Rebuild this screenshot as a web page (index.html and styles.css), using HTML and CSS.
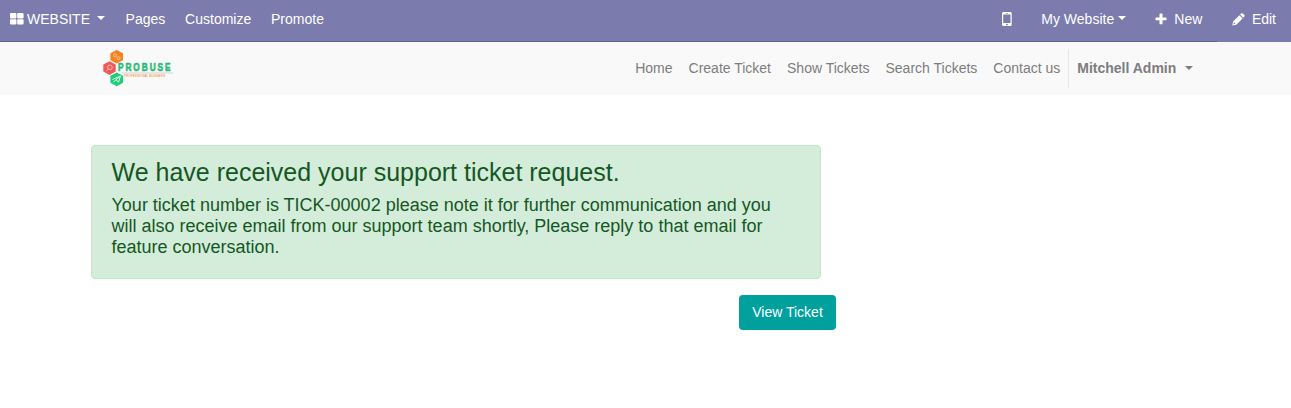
FILE: index.html
```html
<!DOCTYPE html>
<html lang="en">
<head>
<meta charset="utf-8">
<title>Support ticket</title>
<link rel="stylesheet" href="styles.css">
</head>
<body>
<nav class="topbar">
  <div class="menu">
    <a class="brand"><svg class="grid-icon" width="14" height="12" viewBox="0 0 14 12"><rect x="0" y="0" width="6.4" height="5.5" rx="1"/><rect x="7.2" y="0" width="6.4" height="5.5" rx="1"/><rect x="0" y="6.3" width="6.4" height="5.2" rx="1"/><rect x="7.2" y="6.3" width="6.4" height="5.2" rx="1"/></svg><span>WEBSITE</span><i class="caret"></i></a>
    <a>Pages</a>
    <a>Customize</a>
    <a>Promote</a>
  </div>
  <div class="tools">
    <a class="mobile"><svg width="10" height="14" viewBox="0 0 10 14"><path fill-rule="evenodd" d="M1.500 0h7Q9.700 0 9.700 1.500v11Q9.700 14 8.500 14h-7Q0 14 0 12.500v-11Q0 0 1.500 0zM1.200 2.500v8.400h7.300V2.500zM3.600 1v.5h2.500V1zM5 11.700a.8.8 0 1 0 .01 0z"/></svg></a>
    <a class="site">My Website<i class="caret"></i></a>
    <a class="new"><svg width="12" height="12" viewBox="0 0 12 12"><path d="M5 .5h2q.5 0 .5.500v3.500H11q.5 0 .5.500v1.700q0 .5-.5.500H7.500v3.500q0 .5-.5.500H5q-.5 0-.5-.5V7.200H1q-.5 0-.5-.5V5q0-.5.5-.5h3.500V1q0-.5.5-.5z"/></svg><span>New</span></a>
    <a class="edit"><svg width="13" height="13" viewBox="0 0 13 13"><path fill-rule="evenodd" d="M.3 12.500l.8-4L7.400 2.200l3.200 3.200L4.300 11.700zM2 9.300l-.5 2 2-.5zM8 1.600L9.200.4q.8-.7 1.600 0l1.600 1.600q.7.800 0 1.600L11.200 4.800z"/></svg><span>Edit</span></a>
  </div>
</nav>
<header class="header">
  <svg class="logo" width="74" height="40" viewBox="0 0 74 40">
    <path fill="#f58220" d="M14.700 1l6.300 3.300v6.900l-6.300 3.300-6.300-3.300V4.300z"/>
    <path fill="#ee5a5a" d="M7.500 12.200l6.200 3.300v7l-6.200 3.500-6.200-3.500v-7z"/>
    <path fill="#1fcc78" d="M14.700 23.500l6.300 3.300v7l-6.300 3.500-6.300-3.500v-7z"/>
    <g fill="none" stroke="#ffd9c0" stroke-width=".7">
      <circle cx="13" cy="6.300" r="1.500"/><circle cx="16.500" cy="9.300" r="1.500"/>
      <circle cx="8" cy="18.300" r="2.300"/><path d="M6.300 20l-2 2"/>
    </g>
    <path fill="none" stroke="#d9ffec" stroke-width="1" d="M10.500 30.500l8-3.500-2 6.300-2.500-2.600-2.500 2.500M18.500 27l-4.500 3.700"/>
    <g transform="translate(16 22.300) scale(.75 1)"><text class="logo-name">PROBUSE</text></g>
    <path d="M20 24h51" stroke="#bbb" stroke-width=".6"/>
    <text class="logo-tag" x="22" y="28.300" textLength="41" lengthAdjust="spacingAndGlyphs">PROFESSIONAL BUSINESS</text>
  </svg>
  <div class="links">
    <a>Home</a><a>Create Ticket</a><a>Show Tickets</a><a>Search Tickets</a><a>Contact us</a>
    <a class="user">Mitchell Admin<i class="caret"></i></a>
  </div>
</header>
<main class="content">
  <section class="alert">
    <h3>We have received your support ticket request.</h3>
    <h4>Your ticket number is TICK-00002 please note it for further communication and you will also receive email from our support team shortly, Please reply to that email for feature conversation.</h4>
  </section>
  <a class="button">View Ticket</a>
</main>
</body>
</html>
```
FILE: styles.css
```css
* { box-sizing: border-box; }
body { margin: 0; background: #fff; font: 14px/21px "Liberation Sans", Arial, sans-serif; }
svg { display: block; fill: currentColor; flex: none; }
.caret { display: inline-block; border: 4.200px solid transparent; border-top-color: currentColor; border-bottom: 0; }
.topbar { display: flex; justify-content: space-between; height: 42px; padding: 9px 15px 0 10px; color: #fff;
  background: linear-gradient(#5f5e97, #5f5e97) 0 100% / 1217px 1px no-repeat #7c7bad; }
.topbar a { display: flex; align-items: center; height: 21px; }
.menu, .tools { display: flex; }
.menu { gap: 19.800px; }
.menu svg { margin-top: -2px; }
.brand span { margin-left: 3px; }
.brand .caret { margin: -3px .600px 0 7.200px; }
.mobile svg, .new svg, .edit svg { margin-top: -1px; }
.site { margin-left: 29px; }
.site .caret { margin: -3px 0 0 4px; }
.new { margin-left: 29.200px; }
.new span, .edit span { margin-left: 7px; }
.edit { margin-left: 29.500px; }
.header { display: flex; justify-content: space-between; height: 53px; padding: 7px 90px 7px 102px; background: #f9f9f9; }
.logo-name { font-size: 11px; font-weight: 700; letter-spacing: 2.600px; fill: #27b978; stroke: #27b978; stroke-width: .600px; }
.logo-tag { font-size: 4px; fill: #f58220; }
.links { display: flex; color: #7d7d7d; }
.links a { padding: 9px 8px 0; white-space: nowrap; }
.links .user { height: 39px; border-left: 1px solid #e6e6e6; font-weight: 700; }
.user .caret { margin-left: 8.700px; vertical-align: 3px; }
.content { display: flex; flex-direction: column; align-items: flex-end; width: 745px; margin: 50px 0 0 91px; }
.alert { width: 730px; height: 134px; margin-right: 15px; padding: 12px 19.500px; color: #155724; background: #d4edda; border: 1px solid #c3e6cb; border-radius: 4px; }
h3, h4 { margin: 0; font-weight: 400; }
h3 { margin-bottom: 9px; font-size: 25px; line-height: 28px; }
h4 { font-size: 18px; line-height: 21px; }
.button { width: 97px; height: 35px; margin-top: 16px; padding: 7px 0 0 0; border-radius: 4px; color: #fff; background: #00a09d; text-align: center; }
```
